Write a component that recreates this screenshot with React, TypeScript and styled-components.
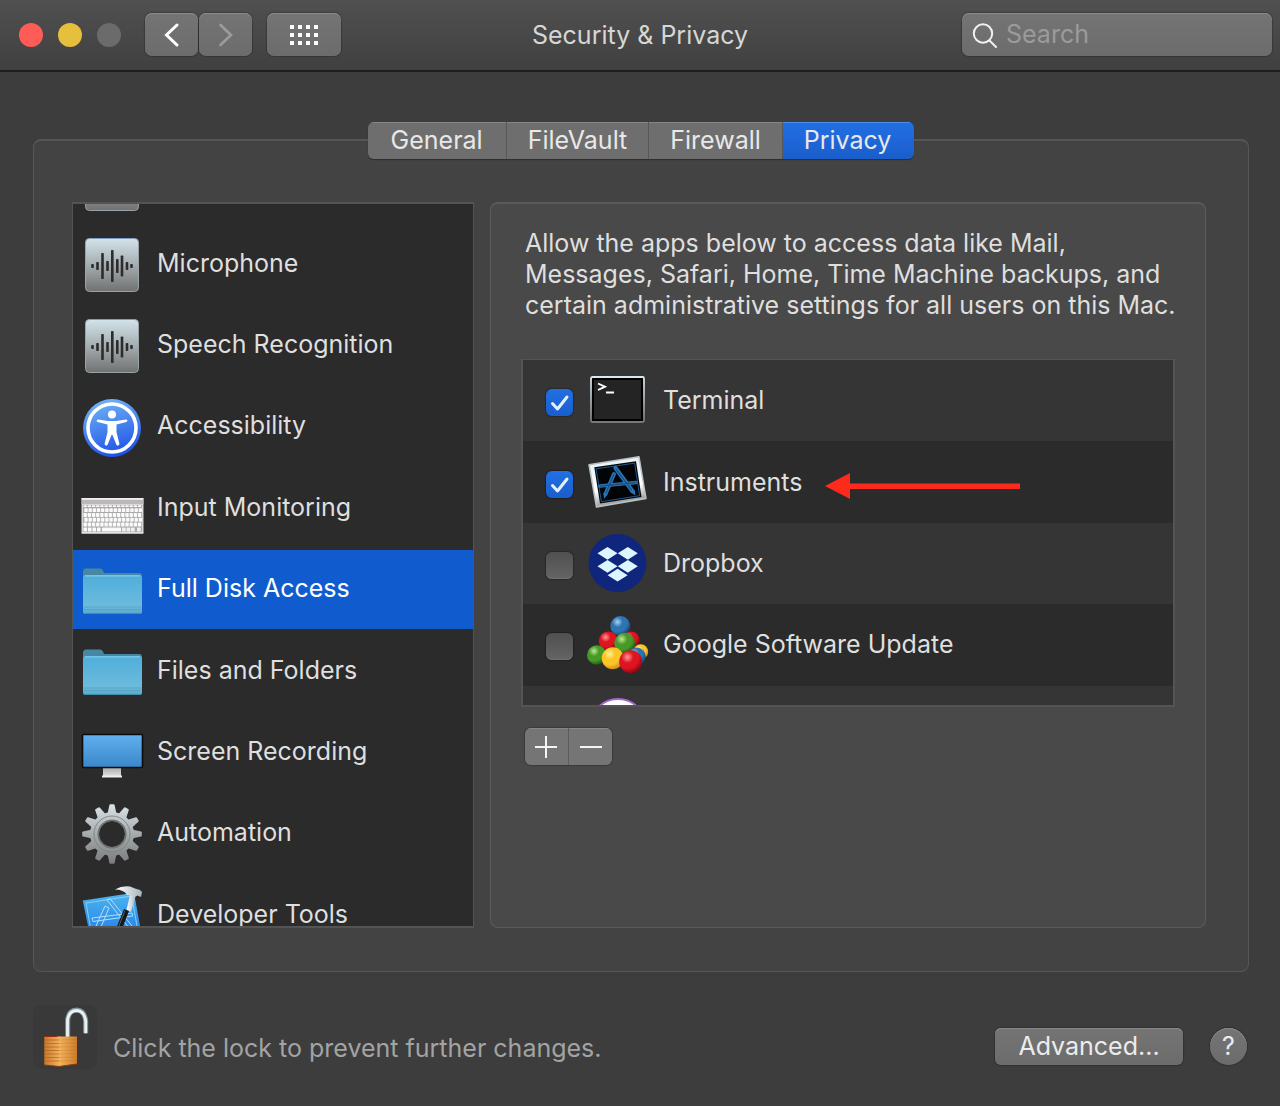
import React, { useState } from 'react';
import styled, { createGlobalStyle, css } from 'styled-components';

const GlobalStyle = createGlobalStyle`
  *, *::before, *::after { box-sizing: border-box; }
  body {
    margin: 0;
    background: #3d3d3d;
    color: #dfdfdf;
    font-family: Inter, Roboto, 'Liberation Sans', sans-serif;
    font-size: 25px;
    line-height: 31px;
  }
  button, input { font: inherit; color: inherit; }
`;

const Window = styled.div`
  min-height: 100vh;
  display: flex;
  flex-direction: column;
`;

const Toolbar = styled.header`
  display: grid;
  grid-template-columns: 1fr auto 1fr;
  align-items: center;
  padding: 13px 8px 14px;
  background: linear-gradient(#505050, #404040);
  border-bottom: 2px solid #1f1f1f;
`;

const ToolbarLeft = styled.div`
  display: flex;
  align-items: center;
  gap: 15px;
`;

const Lights = styled.div`
  display: flex;
  gap: 15px;
  margin: 0 9px 0 11px;
`;

const Light = styled.button<{ $color: string }>`
  width: 24px;
  height: 24px;
  padding: 0;
  border: 0;
  border-radius: 50%;
  background: ${(p) => p.$color};
`;

const NavPair = styled.div`
  display: flex;
  gap: 1px;
`;

const raised = css`
  border: 0;
  background: linear-gradient(#747474, #6c6c6c);
  box-shadow: inset 0 1px 0 #8a8a8a, 0 0 1px 1px rgba(0, 0, 0, 0.2);
`;

const ToolButton = styled.button<{ $wide?: boolean }>`
  ${raised}
  display: grid;
  place-items: center;
  width: ${(p) => (p.$wide ? 74 : 53)}px;
  height: 43px;
  padding: 0;
  border-radius: 7px;
`;

const Title = styled.h1`
  margin: 0;
  padding-top: 2px;
  font-size: inherit;
  font-weight: 400;
  color: #d6d6d6;
`;

const SearchField = styled.label`
  ${raised}
  justify-self: end;
  display: flex;
  align-items: center;
  gap: 8px;
  width: 310px;
  height: 43px;
  padding: 0 10px;
  border-radius: 7px;
`;

const SearchInput = styled.input`
  flex: 1;
  min-width: 0;
  padding: 0;
  border: 0;
  outline: 0;
  background: none;
  &::placeholder { color: #9b9b9b; opacity: 1; }
`;

const Main = styled.main`
  flex: 1;
  display: flex;
  flex-direction: column;
  padding: 50px 31px 0 33px;
`;

const Tabs = styled.div`
  position: relative;
  align-self: center;
  display: flex;
  border-radius: 6px;
  overflow: hidden;
  box-shadow: 0 1px 1px rgba(0, 0, 0, 0.35);
`;

const Tab = styled.button<{ $active: boolean }>`
  height: 37px;
  padding: 0 21px;
  border: 0;
  border-right: 1px solid #585858;
  background: #6e6e6e;
  box-shadow: inset 0 1px 0 #868686;
  color: #e8e8e8;
  &:first-child { padding: 0 23px; }
  &:last-child { border-right: 0; padding-right: 23px; }
  ${(p) =>
    p.$active &&
    css`
      background: linear-gradient(#2170e4, #1a5dcb);
      box-shadow: inset 0 1px 0 #4d8ff0;
    `}
`;

const GroupBox = styled.section`
  display: flex;
  gap: 16px;
  margin-top: -20px;
  padding: 61px 42px 43px 38px;
  border: 1px solid #565656;
  border-top-width: 2px;
  border-radius: 8px;
  background: #434343;
`;

const Sidebar = styled.nav`
  flex: 0 0 402px;
  height: 726px;
  overflow: hidden;
  border: 2px solid #545454;
  border-left-width: 1px;
  border-right-width: 1px;
  background: #2b2b2b;
`;

const Categories = styled.ul`
  display: grid;
  grid-template-rows: repeat(10, 1fr);
  gap: 2px;
  height: 812px;
  margin: -61px 0 0;
  padding: 0;
  list-style: none;
`;

const Category = styled.button<{ $active: boolean }>`
  display: flex;
  align-items: center;
  gap: 13px;
  width: 100%;
  height: 100%;
  padding: 0 7px;
  border: 0;
  text-align: left;
  white-space: nowrap;
  background: ${(p) => (p.$active ? '#105ccf' : 'none')};
  color: ${(p) => (p.$active ? '#fff' : '#dfdfdf')};
`;

const CategoryName = styled.span`
  padding-bottom: 2px;
`;

const Icon = styled.svg.attrs({ viewBox: '0 0 64 64', 'aria-hidden': true })`
  flex: none;
  width: 64px;
  height: 64px;
  overflow: visible;
`;

const Panel = styled.div`
  flex: 1;
  min-width: 0;
  padding: 24px 30px;
  border: 1px solid #5b5b5b;
  border-top-width: 2px;
  border-radius: 8px;
  background: #494949;
`;

const Explanation = styled.p`
  margin: 0 0 38px;
  padding-left: 4px;
  white-space: nowrap;
`;

const AppList = styled.div`
  height: 348px;
  overflow: hidden;
  border: 2px solid #545454;
  border-top-width: 1px;
`;

const AppRows = styled.ul`
  display: grid;
  grid-template-rows: repeat(5, 1fr);
  height: 407px;
  margin: 0;
  padding: 0;
  list-style: none;
`;

const AppRow = styled.li`
  position: relative;
  background: #353535;
  &:nth-child(even) { background: #2b2b2b; }
`;

const AppLabel = styled.label`
  display: flex;
  align-items: center;
  gap: 13px;
  height: 100%;
  padding-left: 23px;
`;

const CheckBox = styled.span`
  display: grid;
  width: 27px;
  height: 27px;
  margin-top: 4px;
  > * { grid-area: 1 / 1; pointer-events: none; }
`;

const CheckInput = styled.input`
  appearance: none;
  width: 27px;
  height: 27px;
  margin: 0;
  border-radius: 6px;
  background: linear-gradient(#505050, #646464);
  box-shadow: 0 0 1px 1px rgba(0, 0, 0, 0.25), inset 0 -1px 0 #6f6f6f;
  &:checked {
    background: linear-gradient(#2170e4, #1a5dcb);
    box-shadow: 0 0 1px 1px rgba(0, 0, 0, 0.25);
  }
`;

const Arrow = styled.svg`
  position: absolute;
  left: 302px;
  top: 32px;
  width: 196px;
  height: 26px;
`;

const Segments = styled.div`
  display: flex;
  width: max-content;
  margin: 21px 0 0 4px;
  border-radius: 6px;
  overflow: hidden;
  box-shadow: 0 0 1px 1px rgba(0, 0, 0, 0.2);
`;

const Segment = styled.button`
  display: grid;
  place-items: center;
  width: 43px;
  height: 37px;
  padding: 0;
  border: 0;
  background: #757575;
  box-shadow: inset 0 1px 0 #868686;
  & + & { width: 44px; border-left: 1px solid #5c5c5c; }
`;

const Footer = styled.footer`
  display: flex;
  align-items: flex-end;
  gap: 16px;
  padding: 33px 33px 37px;
`;

const LockButton = styled.button`
  width: 64px;
  height: 64px;
  padding: 0;
  border: 0;
  border-radius: 8px;
  background: #393939;
`;

const Hint = styled.p`
  flex: 1;
  margin: 0;
  padding-bottom: 5px;
  color: #a3a3a3;
`;

const Actions = styled.div`
  display: flex;
  align-items: center;
  gap: 27px;
  padding-bottom: 4px;
`;

const PushButton = styled.button`
  ${raised}
  width: 188px;
  height: 37px;
  padding: 0;
  border-radius: 6px;
  color: #ececec;
`;

const HelpButton = styled.button`
  ${raised}
  width: 37px;
  height: 37px;
  padding: 0;
  border-radius: 50%;
  color: #ececec;
`;

const waveBars = [
  [12.500, 2], [17.500, 4], [22.500, 13], [27.500, 5], [32.300, 16], [37.300, 7], [42, 10.500], [47, 4], [51.500, 2],
];

const WaveIcon = () => (
  <Icon>
    <defs>
      <linearGradient id="wave" x2="0" y2="1">
        <stop offset="0" stopColor="#d2e4ea" />
        <stop offset="0.5" stopColor="#a5adb0" />
        <stop offset="1" stopColor="#717171" />
      </linearGradient>
    </defs>
    <rect x="5.500" y="6.500" width="53" height="53" rx="4" fill="url(#wave)" stroke="#98a3a8" />
    <path d="M9 6.500H55" stroke="#7d9cc0" />
    {waveBars.map(([x, h]) => (
      <rect key={x} x={x - 1.3} y={34 - h} width="2.600" height={h * 2} rx="0.800" fill="#2c2c2c" />
    ))}
  </Icon>
);

const AccessIcon = () => (
  <Icon>
    <defs>
      <linearGradient id="acc" x1="0.3" x2="0.6" y2="1">
        <stop offset="0" stopColor="#72b4f5" />
        <stop offset="1" stopColor="#1b50e8" />
      </linearGradient>
    </defs>
    <circle cx="32" cy="33" r="29" fill="url(#acc)" />
    <circle cx="32" cy="33" r="24" fill="none" stroke="#fff" strokeWidth="3.600" />
    <circle cx="32" cy="19.500" r="4" fill="#fff" />
    <path
      d="M18 24.500L28 26H36L46 24.500Q48.500 25 46.500 27L36.500 29.500V37L39.500 49Q38.500 51.500 36.500 50L32.500 40H31.500L27.500 50Q25.500 51.500 24.500 49L27.500 37V29.500L17.500 27Q15.500 25.500 18 24.500Z"
      fill="#fff"
    />
  </Icon>
);

const KeyboardIcon = () => (
  <Icon>
    <rect x="1.500" y="22" width="62" height="35.500" rx="1" fill="#d9d7d8" />
    <rect x="1.500" y="22" width="62" height="1.500" fill="#f1f1f1" />
    <rect x="1.500" y="24" width="62" height="4" fill="#bdb9bb" />
    <rect x="3" y="29" width="59" height="27" fill="#aaa8a9" />
    {[0, 1, 2, 3, 4].map((row) =>
      Array.from({ length: 14 }, (_, i) => (
        <rect
          key={`${row}-${i}`}
          x={3.5 + i * 4.18 + (row % 2 ? 0.8 : 0)}
          y={row === 0 ? 29.3 : 27.4 + row * 4.8}
          width="3.400"
          height={row === 0 ? 1.8 : 3.9}
          rx="0.600"
          fill="#fafafa"
        />
      )),
    )}
    {[3.5, 8, 12.500, 17].map((x) => (
      <rect key={x} x={x} y="51.500" width="3.600" height="4" rx="0.600" fill="#fafafa" />
    ))}
    <rect x="22" y="51.500" width="19" height="4" rx="0.600" fill="#fafafa" />
    {[42, 46.500, 51, 57].map((x) => (
      <rect key={x} x={x} y="51.500" width="3.800" height="4" rx="0.600" fill="#f0f0f0" />
    ))}
    <rect x="1.500" y="56.500" width="62" height="1" fill="#f0f0f0" />
  </Icon>
);

const FolderIcon = () => (
  <Icon>
    <defs>
      <linearGradient id="folder" x2="0" y2="1">
        <stop offset="0" stopColor="#4faedb" />
        <stop offset="0.8" stopColor="#6cbbdc" />
        <stop offset="1" stopColor="#58a7c8" />
      </linearGradient>
    </defs>
    <path d="M3 14Q3 10.500 6 10.500H20Q22 10.500 23 12.500L24 15H59Q62 15 62 18V26H3Z" fill="#4787a2" />
    <rect x="3" y="17" width="59" height="39" rx="2.500" fill="url(#folder)" />
    <path d="M5 17.800H60" stroke="#82cbe9" strokeWidth="1.200" />
    <path d="M3.500 49H61.500M3.500 51.500H61.500" stroke="#54a2c3" strokeWidth="0.800" />
    <path d="M5 55.500H60" stroke="#438eae" />
  </Icon>
);

const DisplayIcon = () => (
  <Icon>
    <defs>
      <linearGradient id="screen" x2="0" y2="1">
        <stop offset="0" stopColor="#62b0ee" />
        <stop offset="1" stopColor="#3987c9" />
      </linearGradient>
      <linearGradient id="stand" x2="0" y2="1">
        <stop offset="0" stopColor="#a9a9a9" />
        <stop offset="1" stopColor="#dedede" />
      </linearGradient>
    </defs>
    <path d="M23 47H41V56H23Z" fill="url(#stand)" />
    <path d="M22 55.500H42V57.500H22Z" fill="#ededed" />
    <rect x="2.500" y="14.500" width="60" height="33" rx="1" fill="url(#screen)" stroke="#0c0c0c" strokeWidth="1.600" />
  </Icon>
);

const GearIcon = () => (
  <Icon>
    <defs>
      <linearGradient id="gear" gradientUnits="userSpaceOnUse" x1="0" x2="0" y1="2" y2="62">
        <stop offset="0" stopColor="#dbe4e8" />
        <stop offset="0.5" stopColor="#a5aaac" />
        <stop offset="1" stopColor="#7c7c7c" />
      </linearGradient>
      <mask id="teeth">
        {Array.from({ length: 12 }, (_, i) => (
          <path key={i} d="M27.500 12L29.400 3Q29.600 2.200 30.400 2.200H33.600Q34.400 2.200 34.600 3L36.500 12Z" fill="#fff" transform={`rotate(${i * 30} 32 32)`} />
        ))}
        <circle cx="32" cy="32" r="22" fill="#fff" />
        <circle cx="32" cy="32" r="13" fill="#000" />
      </mask>
    </defs>
    <rect width="64" height="64" fill="url(#gear)" mask="url(#teeth)" />
    <circle cx="32" cy="32" r="18" fill="none" stroke="#7f8385" strokeWidth="0.900" />
    <circle cx="32" cy="32" r="13.700" fill="none" stroke="#6f7273" strokeWidth="1.600" />
  </Icon>
);

const ToolsIcon = () => (
  <Icon>
    <defs>
      <linearGradient id="sheet" x2="0" y2="1">
        <stop offset="0" stopColor="#4db5ee" />
        <stop offset="1" stopColor="#1a73e8" />
      </linearGradient>
      <linearGradient id="steel">
        <stop offset="0" stopColor="#ffffff" />
        <stop offset="1" stopColor="#a8b4bc" />
      </linearGradient>
    </defs>
    <path d="M2.700 17.500L54 9.700L62 54L12 62Z" fill="url(#sheet)" />
    <path d="M6 20L51.500 13L58.500 51M6 20L13 58" fill="none" stroke="#8fd2f8" strokeWidth="0.900" />
    <g fill="none" stroke="#b2e0fb" strokeWidth="1">
      <path d="M27 17L30 15.500L52 43L49 45ZM25 23L29 25L21 44L16 43Z" />
      <path d="M12 35L52 30L52.500 33L13 38.500Z" />
    </g>
    <path d="M50 12L56 12L51 29L46.500 27Z" fill="url(#steel)" />
    <path d="M35 6.500Q42 2.500 50 3.500L55 5.500L60 7L62 9L61 14L57.500 12.500L55.500 13.500L47 12Q44 6.500 35 6.500Z" fill="url(#steel)" />
    <path d="M44 26L49 28L42 46L36 46Z" fill="#15181b" />
    <path d="M45 27.500L38.500 44" stroke="#596067" />
  </Icon>
);

const TerminalIcon = () => (
  <Icon>
    <defs>
      <linearGradient id="termEdge" x2="0" y2="1">
        <stop offset="0" stopColor="#d7e8ef" />
        <stop offset="1" stopColor="#777" />
      </linearGradient>
    </defs>
    <rect x="5" y="8" width="53" height="45" rx="1.500" fill="#000" stroke="url(#termEdge)" strokeWidth="1.800" />
    <rect x="8" y="11" width="47" height="39" fill="#242424" />
    <path d="M12 14.500L19 17.700L12 21" fill="none" stroke="#fff" strokeWidth="1.900" />
    <path d="M20 23.500H28" stroke="#fff" strokeWidth="2" />
  </Icon>
);

const InstrumentsIcon = () => (
  <Icon>
    <defs>
      <linearGradient id="frame" x2="0.200" y2="1">
        <stop offset="0" stopColor="#e2eef3" />
        <stop offset="0.7" stopColor="#fff" />
        <stop offset="1" stopColor="#999" />
      </linearGradient>
    </defs>
    <path d="M3 14.800L53 6.800L60 48.500L10.500 57Z" fill="url(#frame)" stroke="#b9c1c5" strokeWidth="1.500" strokeLinejoin="round" />
    <path d="M8.300 17.300L50 11.200L55.500 47L14 53.500Z" fill="#020406" />
    <path d="M10 18.800L48.600 13.200L53.600 45.700L15.400 51.700Z" fill="none" stroke="#1f588b" strokeWidth="1" />
    <g stroke="#2b76b8" strokeLinecap="round">
      <path d="M14 36L50 32.500" strokeWidth="3.600" />
      <path d="M28 24L19.500 44" strokeWidth="4" />
      <path d="M29.500 18L46 40.500" strokeWidth="4.200" />
    </g>
    <path d="M17.500 43L21.500 44.500L18 49ZM44 42L48.500 39.500L49.500 45.500Z" fill="#2b76b8" />
    <g stroke="#1b4f80" strokeLinecap="round" strokeWidth="1.300">
      <path d="M14.500 36L50 32.500M28 24L20 43M30 19L45.500 40" />
    </g>
  </Icon>
);

const DropboxIcon = () => (
  <Icon>
    <circle cx="31.500" cy="32" r="29" fill="#10267d" />
    {[[21.500, 22.300], [41.800, 22.300], [21.500, 35.300], [41.800, 35.300], [31.600, 44.200]].map(([x, y]) => (
      <path key={`${x}-${y}`} d={`M${x - 10} ${y}l10 -6.400l10 6.400l-10 6.400z`} fill="#dcf6ff" />
    ))}
  </Icon>
);

const balls: [number, number, number, string][] = [
  [34.300, 13, 10, 'blue'], [45, 27, 8.500, 'red'], [22.300, 28, 9.500, 'red'], [38.700, 30.300, 10.500, 'green'],
  [10.700, 42, 9.700, 'green'], [54.700, 38.700, 7.500, 'yellow'], [50.700, 43.500, 9, 'blue'],
  [26.700, 45.300, 11, 'yellow'], [44.700, 48.700, 11.500, 'red'],
];
const ballColors: Record<string, [string, string, string]> = {
  blue: ['#a7d3f2', '#2e74b0', '#173c62'],
  red: ['#ff9a9a', '#de1420', '#7c0613'],
  green: ['#c3e69b', '#479a27', '#1f5412'],
  yellow: ['#fff39a', '#fcc426', '#c6881a'],
};

const BallsIcon = () => (
  <Icon>
    <defs>
      {Object.entries(ballColors).map(([name, [light, mid, dark]]) => (
        <radialGradient key={name} id={`ball-${name}`} cx="0.360" cy="0.300" r="0.750">
          <stop offset="0" stopColor={light} />
          <stop offset="0.350" stopColor={mid} />
          <stop offset="0.650" stopColor={mid} />
          <stop offset="1" stopColor={dark} />
        </radialGradient>
      ))}
    </defs>
    {balls.map(([x, y, r, color]) => (
      <circle key={`${x}-${y}`} cx={x} cy={y} r={r} fill={`url(#ball-${color})`} />
    ))}
  </Icon>
);

const RingIcon = () => (
  <Icon>
    <circle cx="32" cy="33" r="28" fill="#fff" stroke="#a767d0" strokeWidth="2" />
  </Icon>
);

const LockIcon = () => (
  <Icon>
    <defs>
      <linearGradient id="brassL">
        <stop offset="0" stopColor="#c9772a" />
        <stop offset="1" stopColor="#f3b560" />
      </linearGradient>
      <linearGradient id="brassR">
        <stop offset="0" stopColor="#f5b45e" />
        <stop offset="1" stopColor="#cd7d2a" />
      </linearGradient>
    </defs>
    <path d="M34.700 33V15Q35.500 5 43.700 5Q51.500 5 52.700 16V28.300" fill="none" stroke="#83939a" strokeWidth="5" />
    <path d="M34.500 33V15Q36 5.500 43.700 5.500Q51.500 6 52.700 16V28.300" fill="none" stroke="#e9f1f4" strokeWidth="2.800" />
    <path d="M11.300 31.500H27V61.500L11.300 60Z" fill="url(#brassL)" />
    <path d="M26 31.500H44V59L26 61.500Z" fill="url(#brassR)" />
    {[35, 38.500, 42, 45.500, 49, 52.500, 56].map((y) => (
      <g key={y} stroke="#a85e1f" strokeWidth="0.800">
        <path d={`M11.300 ${y}H26`} opacity="0.800" />
        <path d={`M26 ${y}L44 ${y - 0.5}`} opacity="0.300" />
      </g>
    ))}
    <path d="M11.300 60L26 61.500L44 59" fill="none" stroke="#8a3b0d" strokeWidth="1.200" />
    <path d="M11.300 31.500H24" stroke="#9b2712" />
  </Icon>
);

// The first row is scrolled up until only the foot of its icon shows.
const categories = [
  { name: '', icon: WaveIcon },
  { name: 'Microphone', icon: WaveIcon },
  { name: 'Speech Recognition', icon: WaveIcon },
  { name: 'Accessibility', icon: AccessIcon },
  { name: 'Input Monitoring', icon: KeyboardIcon },
  { name: 'Full Disk Access', icon: FolderIcon },
  { name: 'Files and Folders', icon: FolderIcon },
  { name: 'Screen Recording', icon: DisplayIcon },
  { name: 'Automation', icon: GearIcon },
  { name: 'Developer Tools', icon: ToolsIcon },
];

const apps = [
  { name: 'Terminal', icon: TerminalIcon, allowed: true },
  { name: 'Instruments', icon: InstrumentsIcon, allowed: true, marked: true },
  { name: 'Dropbox', icon: DropboxIcon, allowed: false },
  { name: 'Google Software Update', icon: BallsIcon, allowed: false },
  { name: '', icon: RingIcon, allowed: false },
];

const tabs = ['General', 'FileVault', 'Firewall', 'Privacy'];

export default function App() {
  const [tab, setTab] = useState('Privacy');
  const [category, setCategory] = useState('Full Disk Access');
  const [allowed, setAllowed] = useState(apps.map((a) => a.allowed));
  const toggle = (index: number) => setAllowed(allowed.map((v, i) => (i === index ? !v : v)));

  return (
    <Window>
      <GlobalStyle />
      <Toolbar>
        <ToolbarLeft>
          <Lights>
            <Light $color="#ff5b57" aria-label="Close" />
            <Light $color="#e6bf3d" aria-label="Minimize" />
            <Light $color="#6b6b6b" aria-label="Zoom" disabled />
          </Lights>
          <NavPair>
            <ToolButton aria-label="Back">
              <svg width="16" height="26" viewBox="0 0 16 26" fill="none" stroke="#fff" strokeWidth="3" strokeLinecap="round">
                <path d="M13 3L2.500 13L13 23" />
              </svg>
            </ToolButton>
            <ToolButton aria-label="Forward" disabled>
              <svg width="16" height="26" viewBox="0 0 16 26" fill="none" stroke="#9c9c9c" strokeWidth="2.600" strokeLinecap="round">
                <path d="M2.500 3L13 13L2.500 23" />
              </svg>
            </ToolButton>
          </NavPair>
          <ToolButton $wide aria-label="Show All">
            <svg width="30" height="22" viewBox="0 0 30 22" fill="#fff">
              {[0, 1, 2].map((r) =>
                [0, 1, 2, 3].map((c) => <rect key={`${r}${c}`} x={1 + c * 8} y={1 + r * 8} width="4" height="4" />),
              )}
            </svg>
          </ToolButton>
        </ToolbarLeft>
        <Title>Security &amp; Privacy</Title>
        <SearchField>
          <svg width="26" height="26" viewBox="0 0 26 26" fill="none" stroke="#f0f0f0" strokeWidth="2" strokeLinecap="round" aria-hidden>
            <circle cx="11" cy="11.500" r="9.200" />
            <path d="M17.500 18.500L24 25" />
          </svg>
          <SearchInput type="text" placeholder="Search" aria-label="Search" />
        </SearchField>
      </Toolbar>

      <Main>
        <Tabs role="tablist">
          {tabs.map((name) => (
            <Tab key={name} role="tab" aria-selected={tab === name} $active={tab === name} onClick={() => setTab(name)}>
              {name}
            </Tab>
          ))}
        </Tabs>
        <GroupBox>
          <Sidebar aria-label="Privacy categories">
            <Categories>
              {categories.map(({ name, icon: Glyph }) => (
                <li key={name}>
                  <Category $active={category === name} onClick={() => setCategory(name)}>
                    <Glyph />
                    <CategoryName>{name}</CategoryName>
                  </Category>
                </li>
              ))}
            </Categories>
          </Sidebar>
          <Panel>
            <Explanation>
              Allow the apps below to access data like Mail,
              <br />
              Messages, Safari, Home, Time Machine backups, and
              <br />
              certain administrative settings for all users on this Mac.
            </Explanation>
            <AppList>
              <AppRows>
                {apps.map(({ name, icon: Glyph, marked }, i) => (
                  <AppRow key={name}>
                    <AppLabel>
                      <CheckBox>
                        <CheckInput type="checkbox" checked={allowed[i]} onChange={() => toggle(i)} />
                        {allowed[i] && (
                          <svg width="27" height="27" viewBox="0 0 27 27" fill="none" stroke="#e6effc" strokeWidth="3" strokeLinecap="round" strokeLinejoin="round">
                            <path d="M6.500 14.500L11.500 20L21 8" />
                          </svg>
                        )}
                      </CheckBox>
                      <Glyph />
                      <span>{name}</span>
                    </AppLabel>
                    {marked && (
                      <Arrow viewBox="0 0 196 26" aria-hidden>
                        <path d="M0 13L25 0V10.500H195V16H25V26Z" fill="#fe2b1d" />
                      </Arrow>
                    )}
                  </AppRow>
                ))}
              </AppRows>
            </AppList>
            <Segments>
              <Segment aria-label="Add">
                <svg width="24" height="24" viewBox="0 0 24 24" stroke="#f4f4f4" strokeWidth="2">
                  <path d="M0 12H22M11 1V23" />
                </svg>
              </Segment>
              <Segment aria-label="Remove">
                <svg width="24" height="24" viewBox="0 0 24 24" stroke="#f4f4f4" strokeWidth="2">
                  <path d="M1 12H23" />
                </svg>
              </Segment>
            </Segments>
          </Panel>
        </GroupBox>
      </Main>

      <Footer>
        <LockButton aria-label="Lock">
          <LockIcon />
        </LockButton>
        <Hint>Click the lock to prevent further changes.</Hint>
        <Actions>
          <PushButton>Advanced...</PushButton>
          <HelpButton aria-label="Help">?</HelpButton>
        </Actions>
      </Footer>
    </Window>
  );
}
